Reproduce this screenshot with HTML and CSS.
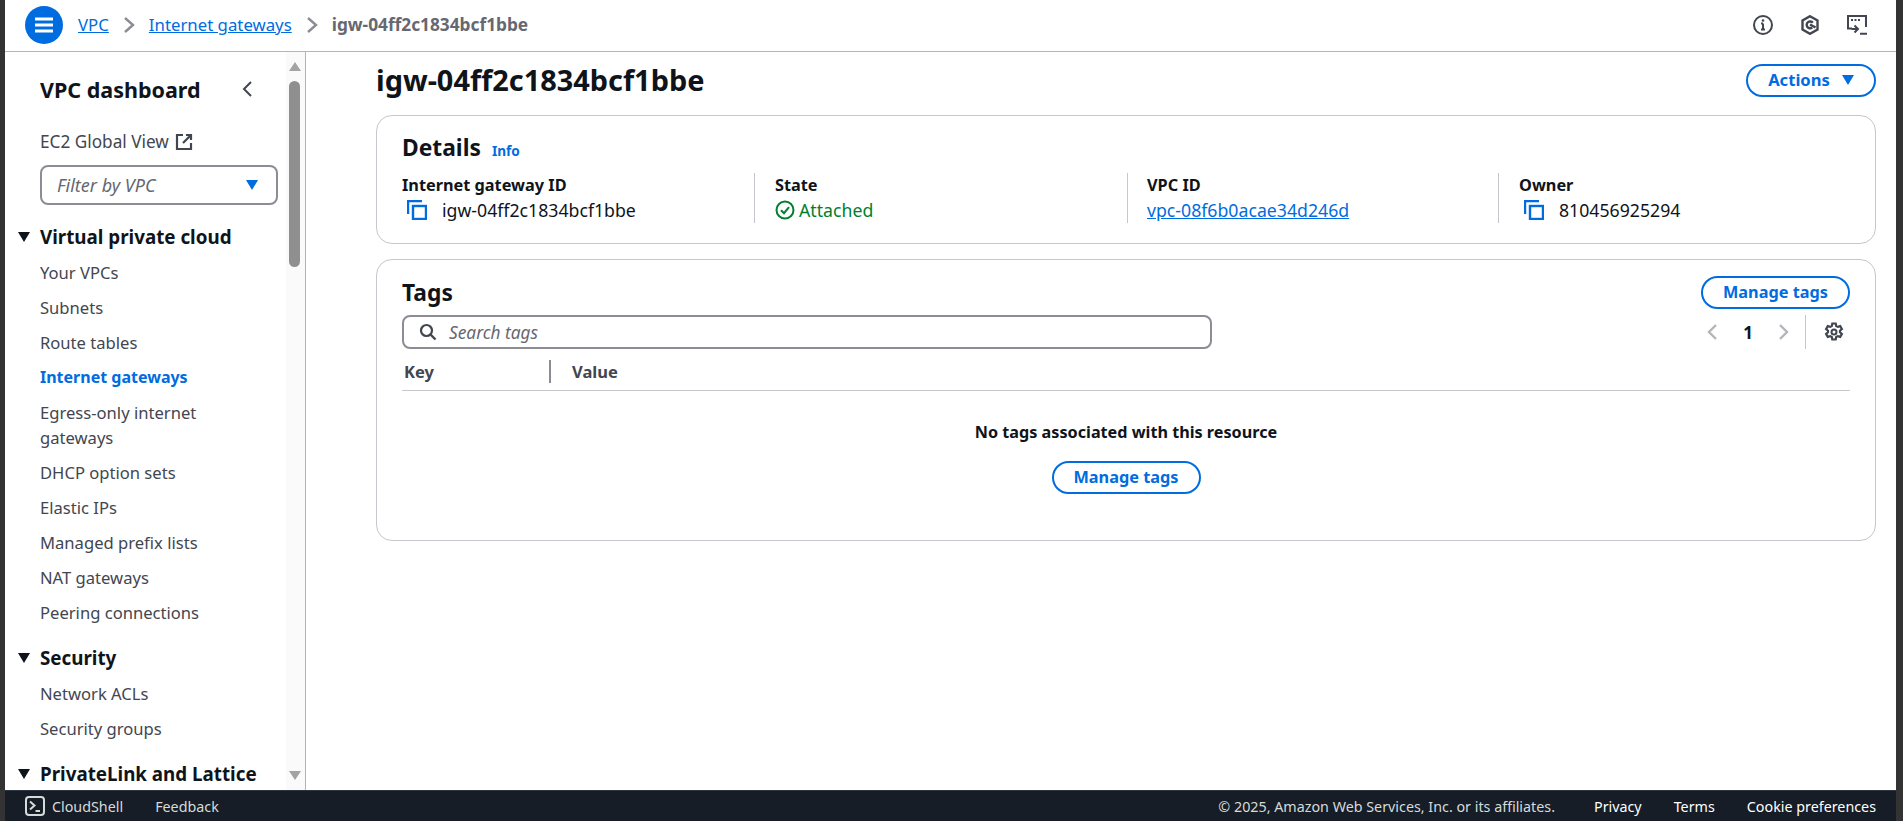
FILE: index.html
```html
<!DOCTYPE html>
<html lang="en">
<head>
    <meta charset="UTF-8">
    <meta name="viewport" content="width=device-width, initial-scale=1.0">
    <title>igw-04ff2c1834bcf1bbe | VPC Console</title>
    <link rel="stylesheet" href="styles.css">
</head>
<body>

<div class="app">
    <header class="topbar">
        <button class="menu-btn" aria-label="Open navigation">
            <svg width="20" height="20" viewBox="0 0 20 20"><path d="M1 4h18M1 10h18M1 16h18" stroke="#fff" stroke-width="3"/></svg>
        </button>
        <nav class="crumbs">
            <a href="#">VPC</a>
            <svg class="crumb-sep" width="12" height="18" viewBox="0 0 12 18"><path d="M2 2l8 7-8 7" fill="none" stroke="#8c8c94" stroke-width="2.400"/></svg>
            <a href="#">Internet gateways</a>
            <svg class="crumb-sep" width="12" height="18" viewBox="0 0 12 18"><path d="M2 2l8 7-8 7" fill="none" stroke="#8c8c94" stroke-width="2.400"/></svg>
            <span class="crumb-current">igw-04ff2c1834bcf1bbe</span>
        </nav>
        <div class="top-icons">
            <svg width="20" height="20" viewBox="0 0 20 20"><circle cx="10" cy="10" r="9" fill="none" stroke="#424650" stroke-width="2"/><path d="M10 8.500v6M8 14.500h4M8 8.500h2" fill="none" stroke="#424650" stroke-width="2"/><circle cx="10" cy="5.500" r="1.300" fill="#424650"/></svg>
            <svg width="18" height="20" viewBox="0 0 18 20"><path d="M9 1.200l7.500 4.300v9L9 18.800l-7.500-4.300v-9z" fill="none" stroke="#424650" stroke-width="2.400"/><path d="M11.800 7.800A3.400 3.400 0 1 0 11.200 12.500" fill="none" stroke="#424650" stroke-width="2.400"/><path d="M9 9.500l5.500 3" stroke="#424650" stroke-width="2.400"/></svg>
            <svg width="20" height="20" viewBox="0 0 20 20"><path d="M5 13.500H1V1h18v11" fill="none" stroke="#424650" stroke-width="2"/><path d="M4 5h2M7.500 5h2M11 5h2" stroke="#424650" stroke-width="2"/><path d="M4.500 14h6M7.500 10.500l3.500 3.500-3.500 3.500M13 18.800h7" fill="none" stroke="#424650" stroke-width="2"/></svg>
        </div>
    </header>

    <div class="middle">
        <aside class="side">
            <div class="side-scroll">
                <div class="side-head">
                    <h2>VPC dashboard</h2>
                    <svg width="12" height="18" viewBox="0 0 12 18"><path d="M10 2L3 9l7 7" fill="none" stroke="#424650" stroke-width="2"/></svg>
                </div>
                <a class="nav-link global" href="#">EC2 Global View
                    <svg width="18" height="18" viewBox="0 0 18 18"><path d="M8 2H2v14h14v-6M11 2h5v5M16 2L8 10" fill="none" stroke="#424650" stroke-width="2.200"/></svg>
                </a>
                <div class="filter">
                    <span>Filter by VPC</span>
                    <i class="tri tri-blue"></i>
                </div>

                <div class="nav-group"><i class="tri"></i>Virtual private cloud</div>
                <a class="nav-link" href="#">Your VPCs</a>
                <a class="nav-link" href="#">Subnets</a>
                <a class="nav-link" href="#">Route tables</a>
                <a class="nav-link active" href="#">Internet gateways</a>
                <a class="nav-link" href="#">Egress-only internet gateways</a>
                <a class="nav-link" href="#">DHCP option sets</a>
                <a class="nav-link" href="#">Elastic IPs</a>
                <a class="nav-link" href="#">Managed prefix lists</a>
                <a class="nav-link" href="#">NAT gateways</a>
                <a class="nav-link" href="#">Peering connections</a>

                <div class="nav-group"><i class="tri"></i>Security</div>
                <a class="nav-link" href="#">Network ACLs</a>
                <a class="nav-link" href="#">Security groups</a>

                <div class="nav-group"><i class="tri"></i>PrivateLink and Lattice</div>
            </div>
            <div class="scrollbar">
                <i class="arrow-up"></i>
                <div class="thumb"></div>
                <i class="arrow-down"></i>
            </div>
        </aside>

        <main class="content">
            <div class="title-row">
                <h1>igw-04ff2c1834bcf1bbe</h1>
                <button class="btn btn-actions">Actions <i class="tri tri-blue"></i></button>
            </div>

            <section class="card details">
                <div class="card-title"><h2>Details</h2><a class="info" href="#">Info</a></div>
                <div class="detail-grid">
                    <div class="detail">
                        <div class="label">Internet gateway ID</div>
                        <div class="value">
                            <svg class="copy" width="20" height="20" viewBox="0 0 20 20"><path d="M1 14V1h14" fill="none" stroke="#006ce0" stroke-width="2.400"/><rect x="6" y="6" width="13" height="13" fill="none" stroke="#006ce0" stroke-width="2.400"/></svg>
                            igw-04ff2c1834bcf1bbe
                        </div>
                    </div>
                    <div class="detail">
                        <div class="label">State</div>
                        <div class="value ok">
                            <svg width="20" height="20" viewBox="0 0 20 20"><circle cx="10" cy="10" r="8.500" fill="none" stroke="#00802f" stroke-width="2"/><path d="M6 10.200l3 3 5-6" fill="none" stroke="#00802f" stroke-width="2"/></svg>
                            Attached
                        </div>
                    </div>
                    <div class="detail vpc-col">
                        <div class="label">VPC ID</div>
                        <div class="value"><a href="#">vpc-08f6b0acae34d246d</a></div>
                    </div>
                    <div class="detail">
                        <div class="label">Owner</div>
                        <div class="value">
                            <svg class="copy" width="20" height="20" viewBox="0 0 20 20"><path d="M1 14V1h14" fill="none" stroke="#006ce0" stroke-width="2.400"/><rect x="6" y="6" width="13" height="13" fill="none" stroke="#006ce0" stroke-width="2.400"/></svg>
                            810456925294
                        </div>
                    </div>
                </div>
            </section>

            <section class="card tags">
                <div class="tags-head">
                    <h2>Tags</h2>
                    <button class="btn btn-manage">Manage tags</button>
                </div>
                <div class="tools">
                    <div class="search">
                        <svg width="18" height="18" viewBox="0 0 18 18"><circle cx="7.500" cy="7.500" r="5.500" fill="none" stroke="#424650" stroke-width="2.200"/><path d="M11.500 11.500l5 5" stroke="#424650" stroke-width="2.400"/></svg>
                        <span>Search tags</span>
                    </div>
                    <div class="pager">
                        <svg width="12" height="18" viewBox="0 0 12 18"><path d="M10 2L3 9l7 7" fill="none" stroke="#b4b4bb" stroke-width="2.400"/></svg>
                        <b>1</b>
                        <svg width="12" height="18" viewBox="0 0 12 18"><path d="M2 2l7 7-7 7" fill="none" stroke="#b4b4bb" stroke-width="2.400"/></svg>
                    </div>
                    <div class="prefs">
                        <svg width="20" height="20" viewBox="0 0 20 20"><path d="M8.300 1.500h3.400l.5 2.500 1.600.9 2.400-.8 1.700 3-1.900 1.600v1.600l1.900 1.600-1.700 3-2.400-.8-1.600.9-.5 2.500H8.300l-.5-2.500-1.600-.9-2.400.8-1.700-3 1.900-1.600V8.700L2.100 7.100l1.700-3 2.400.8 1.600-.9z" fill="none" stroke="#424650" stroke-width="2.200"/><circle cx="10" cy="10" r="2.500" fill="none" stroke="#424650" stroke-width="2"/></svg>
                    </div>
                </div>
                <div class="thead">
                    <div class="th th-key">Key</div>
                    <div class="th th-value">Value</div>
                </div>
                <div class="empty">
                    <p>No tags associated with this resource</p>
                    <button class="btn btn-manage">Manage tags</button>
                </div>
            </section>
        </main>
    </div>

    <footer class="footer">
        <svg width="20" height="20" viewBox="0 0 20 20"><rect x="1" y="1" width="18" height="18" rx="3" fill="none" stroke="#d5dbdb" stroke-width="2"/><path d="M5 5.500l4.500 4-4.500 4M10.500 15H15" fill="none" stroke="#d5dbdb" stroke-width="2"/></svg>
        <span class="cloudshell">CloudShell</span>
        <span class="feedback">Feedback</span>
        <span class="copyright">© 2025, Amazon Web Services, Inc. or its affiliates.</span>
        <a href="#">Privacy</a>
        <a href="#">Terms</a>
        <a href="#">Cookie preferences</a>
    </footer>
</div>

</body>
</html>
```

FILE: styles.css
```css
* { box-sizing: border-box; }

html, body {
    margin: 0;
    height: 821px;
    overflow: hidden;
}
body {
    font-family: "Noto Sans", "Open Sans", sans-serif;
    font-size: 14px;
    color: #0f141a;
    background: #fff;
}
h1, h2, p { margin: 0; }
i { display: block; }

.app {
    display: flex;
    flex-direction: column;
    height: 821px;
    border-left: 5px solid #333;
    border-right: 7px solid #333;
}

/* top bar */
.topbar {
    display: flex;
    align-items: center;
    height: 52px;
    flex: none;
    padding: 0 29px 2px 20px;
    border-bottom: 1px solid #b4b4bb;
}
.menu-btn {
    display: flex;
    align-items: center;
    justify-content: center;
    width: 38px;
    height: 38px;
    padding: 0;
    border: 0;
    border-radius: 50%;
    background: #006ce0;
}
.crumbs {
    display: flex;
    align-items: center;
    margin-left: 15px;
    font-size: 16.8px;
}
.crumbs a {
    color: #006ce0;
}
.crumb-sep { margin: 0 14px; }
.crumb-current {
    font-size: 17.3px;
    font-weight: 700;
    color: #656871;
}
.top-icons {
    display: flex;
    align-items: center;
    gap: 28px;
    margin-left: auto;
}

/* layout */
.middle {
    display: flex;
    flex: 1;
    min-height: 0;
}

/* side navigation */
.side {
    display: flex;
    width: 301px;
    flex: none;
    border-right: 1px solid #b4b4bb;
    overflow: hidden;
}
.side-scroll {
    flex: 1;
    min-width: 0;
    padding: 21px 0 0 35px;
    overflow: hidden;
}
.side-head {
    display: flex;
    align-items: center;
    justify-content: space-between;
    height: 32px;
    padding-right: 33px;
}
.side-head h2 {
    font-size: 21.5px;
    font-weight: 700;
}
.nav-link {
    display: block;
    width: 205px;
    line-height: 25px;
    margin-bottom: 10px;
    font-size: 16.6px;
    color: #424650;
    text-decoration: none;
}
.nav-link.active {
    font-size: 16px;
    font-weight: 700;
    color: #006ce0;
}
.global {
    display: flex;
    align-items: center;
    gap: 6px;
    width: auto;
    margin: 24px 0 11px;
    font-size: 17.2px;
}
.filter {
    display: flex;
    align-items: center;
    justify-content: space-between;
    width: 238px;
    height: 40px;
    padding: 0 18px 0 15px;
    border: 2px solid #8c8c94;
    border-radius: 8px;
    font-size: 18px;
    font-style: italic;
    color: #656871;
}
.nav-group {
    display: flex;
    align-items: center;
    height: 25px;
    margin: 19px 0 11px;
    font-size: 18.8px;
    font-weight: 700;
    white-space: nowrap;
}
.nav-group .tri {
    margin: 0 10px 0 -22px;
}
.nav-link + .nav-group { margin-top: 20px; }

.tri {
    width: 0;
    height: 0;
    border-left: 6px solid transparent;
    border-right: 6px solid transparent;
    border-top: 10px solid #0f141a;
}
.tri-blue { border-top-color: #006ce0; }

.scrollbar {
    display: flex;
    flex-direction: column;
    align-items: center;
    width: 19px;
    flex: none;
    padding: 10px 2px 10px 0;
    background: #fafafa;
}
.arrow-up, .arrow-down {
    width: 0;
    height: 0;
    border-left: 6px solid transparent;
    border-right: 6px solid transparent;
}
.arrow-up { border-bottom: 9px solid #a3a3a3; }
.arrow-down { border-top: 9px solid #a3a3a3; margin-top: auto; }
.thumb {
    width: 11px;
    height: 186px;
    margin-top: 10px;
    border-radius: 6px;
    background: #8f8f8f;
}

/* main column */
.content {
    flex: 1;
    min-width: 0;
    padding: 12px 20px 0 70px;
}
.title-row {
    display: flex;
    align-items: center;
    justify-content: space-between;
    height: 33px;
    margin-bottom: 18px;
}
h1 {
    font-size: 28.9px;
    font-weight: 700;
    line-height: 30px;
    margin-top: -2px;
}
.btn {
    height: 33px;
    padding: 0 0 1px;
    border: 2px solid #006ce0;
    border-radius: 17px;
    background: #fff;
    font-family: inherit;
    font-size: 16.3px;
    font-weight: 700;
    color: #006ce0;
}
.btn-actions {
    display: flex;
    align-items: center;
    justify-content: center;
    gap: 12px;
    width: 130px;
    padding-bottom: 2px;
    font-size: 16.6px;
}
.btn-manage { width: 149px; }

.card {
    border: 1px solid #c6c6cd;
    border-radius: 16px;
}
.details {
    height: 129px;
    margin-bottom: 15px;
    padding: 17px 25px 0;
}
.card-title {
    display: flex;
    align-items: baseline;
    gap: 11px;
    height: 30px;
}
.card h2 {
    font-size: 22.8px;
    font-weight: 700;
    line-height: 30px;
}
.info {
    font-size: 13.6px;
    font-weight: 700;
    color: #006ce0;
    text-decoration: none;
}
.detail-grid {
    display: grid;
    grid-template-columns: 352px 373px 371px 1fr;
    margin-top: 10px;
}
.detail {
    height: 50px;
    padding-left: 20px;
    border-left: 1px solid #c6c6cd;
}
.detail:first-child {
    padding-left: 0;
    border-left: 0;
}
.vpc-col { padding-left: 19px; }
.label {
    line-height: 24px;
    font-size: 16.3px;
    font-weight: 700;
}
.value {
    display: flex;
    align-items: center;
    gap: 6px;
    line-height: 26px;
    font-size: 17.7px;
}
.value .copy { margin: 0 9px 0 5px; }
.value a { color: #006ce0; }
.ok { color: #00802f; gap: 4px; }

.tags {
    height: 282px;
    padding: 16px 25px 0;
}
.tags-head {
    display: flex;
    align-items: center;
    justify-content: space-between;
    height: 33px;
}
.tools {
    display: flex;
    align-items: center;
    height: 34px;
    margin-top: 6px;
}
.search {
    display: flex;
    align-items: center;
    gap: 12px;
    width: 810px;
    height: 34px;
    padding-left: 15px;
    border: 2px solid #8c8c94;
    border-radius: 8px;
    font-size: 17.3px;
    font-style: italic;
    color: #656871;
}
.pager {
    display: flex;
    align-items: center;
    gap: 25px;
    margin-left: auto;
    margin-right: 15px;
    font-size: 17px;
}
.prefs {
    display: flex;
    align-items: center;
    height: 34px;
    padding: 0 6px 0 18px;
    border-left: 1px solid #c6c6cd;
}
.thead {
    display: flex;
    align-items: center;
    height: 42px;
    padding: 10px 0 6px 2px;
    border-bottom: 1px solid #c6c6cd;
    font-size: 16.5px;
    font-weight: 700;
    color: #424650;
}
.th-key {
    width: 147px;
    line-height: 23px;
    border-right: 2px solid #8c8c94;
}
.th-value { padding-left: 21px; }
.empty {
    display: flex;
    flex-direction: column;
    align-items: center;
    padding-top: 29px;
}
.empty p {
    margin-bottom: 17px;
    line-height: 24px;
    font-size: 16.2px;
    font-weight: 700;
}

/* footer */
.footer {
    display: flex;
    align-items: center;
    height: 31px;
    flex: none;
    padding: 0 20px;
    background: #161d26;
    border-top: 1px solid #2b3541;
    font-size: 14.3px;
    color: #d5dbdb;
}
.footer a {
    margin-left: 32px;
    color: #fff;
    text-decoration: none;
}
.cloudshell { margin-left: 7px; }
.feedback { margin-left: 32px; }
.copyright { margin-left: auto; margin-right: 7px; }
```
